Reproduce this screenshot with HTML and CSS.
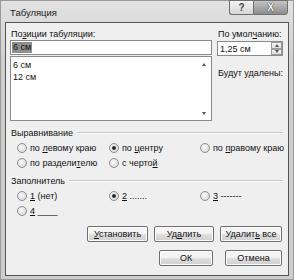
FILE: index.html
```html
<!DOCTYPE html>
<html lang="ru">
<head>
    <meta charset="UTF-8">
    <title>Табуляция</title>
    <link rel="stylesheet" href="styles.css">
</head>
<body>
    <div class="window">
        <div class="titlebar">
            <span class="title">Табуляция</span>
            <div class="controls">
                <span class="help">?</span>
                <span class="close">X</span>
            </div>
        </div>

        <div class="panel">
            <div class="top">
                <div class="left-col">
                    <div class="label">По<u>з</u>иции табуляции:</div>
                    <div class="input"><span class="sel">6 см</span></div>
                    <div class="list">
                        <div class="items">
                            <div>6 см</div>
                            <div>12 см</div>
                        </div>
                        <div class="scroll">
                            <span class="arrow up"></span>
                            <span class="arrow down"></span>
                        </div>
                    </div>
                </div>
                <div class="right-col">
                    <div class="label">По умол<u>ч</u>анию:</div>
                    <div class="spin">
                        <span class="spin-value">1,25 см</span>
                        <div class="spin-buttons">
                            <span class="spin-btn"><i class="arrow up"></i></span>
                            <span class="spin-btn"><i class="arrow down"></i></span>
                        </div>
                    </div>
                    <div class="label removed">Будут удалены:</div>
                </div>
            </div>

            <div class="group-title"><span>Выравнивание</span></div>
            <div class="options">
                <div class="opt"><span class="radio"></span><span>по <u>л</u>евому краю</span></div>
                <div class="opt"><span class="radio checked"></span><span>по <u>ц</u>ентру</span></div>
                <div class="opt"><span class="radio"></span><span>по <u>п</u>равому краю</span></div>
                <div class="opt"><span class="radio"></span><span>по раздели<u>т</u>елю</span></div>
                <div class="opt"><span class="radio"></span><span>с черто<u>й</u></span></div>
            </div>

            <div class="group-title"><span>Заполнитель</span></div>
            <div class="options">
                <div class="opt"><span class="radio"></span><span><u>1</u> (нет)</span></div>
                <div class="opt"><span class="radio checked"></span><span><u>2</u> .......</span></div>
                <div class="opt"><span class="radio"></span><span><u>3</u> -------</span></div>
                <div class="opt"><span class="radio"></span><span><u>4</u> ____</span></div>
            </div>

            <div class="buttons">
                <button class="btn w61"><u>У</u>становить</button>
                <button class="btn w59">Уд<u>а</u>лить</button>
                <button class="btn w62">Удалит<u>ь</u> все</button>
            </div>
            <div class="buttons last">
                <button class="btn w54">ОК</button>
                <button class="btn w57 gap-ok">Отмена</button>
            </div>
        </div>
    </div>
</body>
</html>
```

FILE: styles.css
```css
body {
    margin: 0;
    background-color: #ffffff;
    font-family: "Liberation Sans", Arial, sans-serif;
    font-size: 9px;
    color: #111;
}

u {
    text-decoration: underline;
    text-underline-offset: 1px;
}

.window {
    width: 294px;
    height: 280px;
    box-sizing: border-box;
    background: linear-gradient(#e2e2e2, #cfcfcf 60px, #cdcdcd);
    border: 1px solid #9a9a9a;
    padding: 0 4px 4px 4px;
}

.titlebar {
    height: 21px;
    position: relative;
}

.title {
    position: absolute;
    left: 5px;
    top: 6px;
    font-size: 9.5px;
    color: #1a1a1a;
}

.controls {
    position: absolute;
    right: 1px;
    top: -1px;
    display: flex;
}

.controls span {
    height: 15px;
    box-sizing: border-box;
    border: 1px solid #6f6f6f;
    display: flex;
    align-items: center;
    justify-content: center;
    font-weight: bold;
    font-size: 10px;
}

.help {
    width: 24px;
    border-radius: 0 0 0 3px;
    border-right: none !important;
    background: linear-gradient(#f4f4f4, #d6d6d6);
    color: #444;
}

.close {
    width: 35px;
    border-radius: 0 0 3px 0;
    background: linear-gradient(#c4c4c4, #8c8c8c);
    color: #f4f4f4;
    text-shadow: 0 0 1px #333, 0 0 1px #333;
}

.panel {
    height: 254px;
    box-sizing: border-box;
    background-color: #efefef;
    border: 1px solid #555;
    padding: 0 5px 0 4px;
}

.top {
    display: flex;
    gap: 5px;
}

.left-col {
    width: 202px;
}

.right-col {
    width: 66px;
}

.label {
    height: 12px;
    line-height: 12px;
    margin-top: 5px;
    padding-left: 1px;
    white-space: nowrap;
}

.input {
    height: 15px;
    box-sizing: border-box;
    border: 1px solid #8a8a8a;
    background: #fff;
    padding: 1px 1px;
}

.sel {
    display: inline-block;
    background-color: #8f8f8f;
    color: #111;
    line-height: 11px;
    padding: 0 1px;
}

.list {
    margin-top: 1px;
    height: 65px;
    box-sizing: border-box;
    border: 1px solid #8a8a8a;
    background: #fff;
    display: flex;
}

.items {
    flex: 1;
    padding: 2px 0 0 2px;
    line-height: 12px;
}

.scroll {
    width: 14px;
    display: flex;
    flex-direction: column;
    justify-content: space-between;
    align-items: center;
    padding: 6px 0 5px 0;
}

.arrow {
    display: block;
    width: 0;
    height: 0;
    border-left: 2.5px solid transparent;
    border-right: 2.5px solid transparent;
}

.arrow.up {
    border-bottom: 3px solid #555;
}

.arrow.down {
    border-top: 3px solid #555;
}

.spin {
    margin-top: 1px;
    height: 15px;
    box-sizing: border-box;
    border: 1px solid #8a8a8a;
    background: #fff;
    display: flex;
    align-items: center;
    justify-content: space-between;
    padding-left: 2px;
    white-space: nowrap;
}

.spin-buttons {
    display: flex;
    flex-direction: column;
    height: 13px;
    width: 11px;
}

.spin-btn {
    flex: 1;
    border: 1px solid #9a9a9a;
    background: linear-gradient(#f6f6f6, #dcdcdc);
    display: flex;
    align-items: center;
    justify-content: center;
}

.removed {
    margin-top: 11px;
}

.group-title {
    display: flex;
    align-items: center;
    gap: 4px;
    height: 12px;
    margin-top: 6px;
    padding-left: 1px;
}

.group-title::after {
    content: "";
    flex: 1;
    border-top: 1px solid #c9c9c9;
    border-bottom: 1px solid #fff;
}

.options {
    display: grid;
    grid-template-columns: 92px 91px auto;
    row-gap: 3px;
    margin-top: 3px;
    padding-left: 7px;
}

.opt {
    display: flex;
    align-items: center;
    height: 12px;
    white-space: nowrap;
}

.radio {
    width: 10px;
    height: 10px;
    box-sizing: border-box;
    border-radius: 50%;
    border: 1px solid #8e8e8e;
    background: radial-gradient(circle at 40% 40%, #fafafa, #cfcfcf);
    margin-right: 3px;
    position: relative;
    flex-shrink: 0;
}

.radio.checked::after {
    content: "";
    position: absolute;
    left: 2px;
    top: 2px;
    width: 4px;
    height: 4px;
    border-radius: 50%;
    background: #2a2a2a;
}

.buttons {
    display: flex;
    justify-content: flex-end;
    gap: 6px;
    margin-top: 9px;
    padding-right: 1px;
}

.buttons.last {
    margin-top: 8px;
}

.btn {
    height: 16px;
    padding: 0;
    font-family: inherit;
    font-size: 9px;
    color: #111;
    border: 1px solid #707070;
    border-radius: 2px;
    background: linear-gradient(#f4f4f4 45%, #dddddd 55%, #d0d0d0);
    box-shadow: inset 0 0 0 1px #fbfbfb;
}

.w61 { width: 61px; }
.w59 { width: 60px; }
.w62 { width: 62px; }
.w54 { width: 54px; }
.w57 { width: 57px; }

.gap-ok {
    margin-left: 6px;
}
```
